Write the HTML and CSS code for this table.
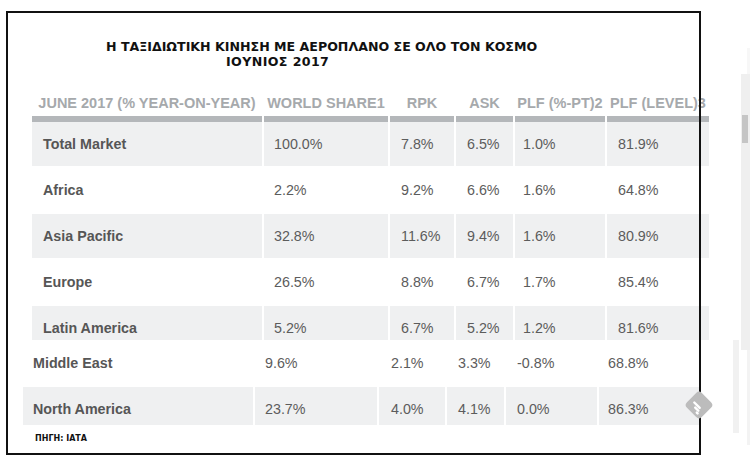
FILE: index.html
```html
<!DOCTYPE html>
<html lang="el">
<head>
<meta charset="utf-8">
<title>Η ταξιδιωτική κίνηση</title>
<link rel="stylesheet" href="styles.css">
</head>
<body>
<div class="frame">
  <div class="title">
    <div class="t1">Η ΤΑΞΙΔΙΩΤΙΚΗ ΚΙΝΗΣΗ ΜΕ ΑΕΡΟΠΛΑΝΟ ΣΕ ΟΛΟ ΤΟΝ ΚΟΣΜΟ</div>
    <div class="t2">ΙΟΥΝΙΟΣ 2017</div>
  </div>

  <div class="tbl tbl-top">
    <div class="row head">
      <div class="hc">JUNE 2017 (% YEAR-ON-YEAR)</div>
      <div class="hc">WORLD SHARE1</div>
      <div class="hc">RPK</div>
      <div class="hc">ASK</div>
      <div class="hc">PLF (%-PT)2</div>
      <div class="hc">PLF (LEVEL)3</div>
    </div>
    <div class="row shade first">
      <div class="c lbl">Total Market</div><div class="c">100.0%</div><div class="c">7.8%</div><div class="c">6.5%</div><div class="c">1.0%</div><div class="c">81.9%</div>
    </div>
    <div class="row">
      <div class="c lbl">Africa</div><div class="c">2.2%</div><div class="c">9.2%</div><div class="c">6.6%</div><div class="c">1.6%</div><div class="c">64.8%</div>
    </div>
    <div class="row shade">
      <div class="c lbl">Asia Pacific</div><div class="c">32.8%</div><div class="c">11.6%</div><div class="c">9.4%</div><div class="c">1.6%</div><div class="c">80.9%</div>
    </div>
    <div class="row">
      <div class="c lbl">Europe</div><div class="c">26.5%</div><div class="c">8.8%</div><div class="c">6.7%</div><div class="c">1.7%</div><div class="c">85.4%</div>
    </div>
    <div class="row shade cut-latin">
      <div class="c lbl">Latin America</div><div class="c">5.2%</div><div class="c">6.7%</div><div class="c">5.2%</div><div class="c">1.2%</div><div class="c">81.6%</div>
    </div>
  </div>

  <div class="tbl tbl-bottom">
    <div class="row">
      <div class="c lbl">Middle East</div><div class="c">9.6%</div><div class="c">2.1%</div><div class="c">3.3%</div><div class="c">-0.8%</div><div class="c">68.8%</div>
    </div>
    <div class="row shade cut-na">
      <div class="c lbl">North America</div><div class="c">23.7%</div><div class="c">4.0%</div><div class="c">4.1%</div><div class="c">0.0%</div><div class="c">86.3%</div>
    </div>
  </div>

  <div class="source">ΠΗΓΗ: ΙΑΤΑ</div>

  <svg class="badge" width="32" height="32" viewBox="0 0 32 32" aria-hidden="true">
    <rect x="5.5" y="5.5" width="21" height="21" rx="4" transform="rotate(45 16 16)" fill="#bcbcbc"/>
    <g fill="#ffffff">
      <rect x="9" y="15" width="10" height="2.4" rx="1.2" transform="rotate(45 14 16.2)"/>
      <rect x="10.4" y="19" width="6.8" height="2.4" rx="1.2" transform="rotate(45 13.8 20.2)"/>
      <rect x="12.4" y="22.8" width="3.6" height="2.4" rx="1.2" transform="rotate(45 14.2 24)"/>
    </g>
  </svg>
</div>

<div class="side">
  <div class="side-a"><div class="stripe-a"></div></div>
  <div class="side-b">
    <div class="strip-top"></div>
    <div class="panel"><div class="thumb"></div></div>
    <div class="strip-bot"></div>
  </div>
</div>
</body>
</html>
```

FILE: styles.css
```css
html, body {
  margin: 0;
  padding: 0;
  background: #ffffff;
}

body {
  display: flex;
  align-items: flex-start;
  width: 750px;
  height: 468px;
  overflow: hidden;
  font-family: "Liberation Sans", Arial, sans-serif;
}

.frame {
  position: relative;
  flex: none;
  width: 695px;
  height: 444px;
  margin: 11px 0 0 6px;
  outline: 2px solid #111111;
  outline-offset: -2px;
  display: flex;
  flex-direction: column;
  align-items: flex-start;
}

.title {
  margin-top: 28px;
  font-family: "DejaVu Sans", Verdana, sans-serif;
  font-weight: bold;
  font-size: 12.6px;
  line-height: 15px;
  color: #111111;
  white-space: nowrap;
}

.t1 { margin-left: 100px; }
.t2 { margin-left: 220px; letter-spacing: 0.4px; }

.tbl {
  display: flex;
  flex-direction: column;
}

.tbl-top {
  margin: 26px 0 0 26px;
}

.tbl-bottom {
  margin: 1px 0 0 17px;
}

.row {
  display: grid;
  column-gap: 2px;
  height: 44px;
  margin-top: 2px;
}

.tbl-top .row {
  grid-template-columns: 230px 124px 64px 57px 90px 102px;
}

.tbl-bottom .row {
  grid-template-columns: 230px 122px 66px 57px 91px 101px;
}

.tbl-bottom .row:first-child { margin-top: 0; }

.row.head {
  height: auto;
  margin-top: 0;
}

.row.first { margin-top: 0; }

.hc {
  font-size: 14.5px;
  line-height: 17px;
  font-weight: bold;
  color: #a6a9ac;
  text-align: center;
  white-space: nowrap;
  display: flex;
  justify-content: center;
  padding-bottom: 4px;
  border-bottom: 6px solid #b4b7ba;
}

.c {
  display: flex;
  align-items: center;
  height: 44px;
  font-size: 14.3px;
  color: #5c5c5c;
  white-space: nowrap;
  box-sizing: border-box;
}

.c.lbl {
  font-weight: bold;
  color: #565656;
}

.shade .c { background: #eff0f1; }

.tbl-top .c:nth-child(1) { padding-left: 11px; }
.tbl-top .c:nth-child(2) { padding-left: 10px; }
.tbl-top .c:nth-child(3) { padding-left: 11px; }
.tbl-top .c:nth-child(4) { padding-left: 11px; }
.tbl-top .c:nth-child(5) { padding-left: 8px; }
.tbl-top .c:nth-child(6) { padding-left: 11px; }

.tbl-bottom .c:nth-child(1) { padding-left: 10px; }
.tbl-bottom .c:nth-child(2) { padding-left: 10px; }
.tbl-bottom .c:nth-child(3) { padding-left: 12px; }
.tbl-bottom .c:nth-child(4) { padding-left: 11px; }
.tbl-bottom .c:nth-child(5) { padding-left: 11px; }
.tbl-bottom .c:nth-child(6) { padding-left: 9px; }

.cut-latin {
  height: 34px;
  overflow: hidden;
}

.cut-na {
  height: 38px;
  overflow: hidden;
}

.source {
  margin: 9px 0 0 29px;
  font-family: "DejaVu Sans", Verdana, sans-serif;
  font-weight: bold;
  font-size: 8px;
  line-height: 10px;
  color: #111111;
}

.badge {
  position: absolute;
  left: 677px;
  top: 378px;
}

.side {
  flex: none;
  display: flex;
  gap: 2px;
  margin-left: 32px;
}

.side-a { width: 6px; }

.stripe-a {
  margin-top: 340px;
  height: 93px;
  background: #f1f1f1;
}

.side-b {
  width: 9px;
  display: flex;
  flex-direction: column;
}

.strip-top {
  margin: 48px 0 0 6px;
  width: 3px;
  height: 26px;
  background: #f7f7f7;
}

.panel {
  height: 276px;
  background: #efefef;
  display: flex;
  flex-direction: column;
}

.thumb {
  margin: 41px 0 0 1px;
  width: 6px;
  height: 28px;
  background: #c5c5c5;
}

.strip-bot {
  margin-left: 6px;
  width: 3px;
  height: 95px;
  background: #f3f3f3;
}
```
